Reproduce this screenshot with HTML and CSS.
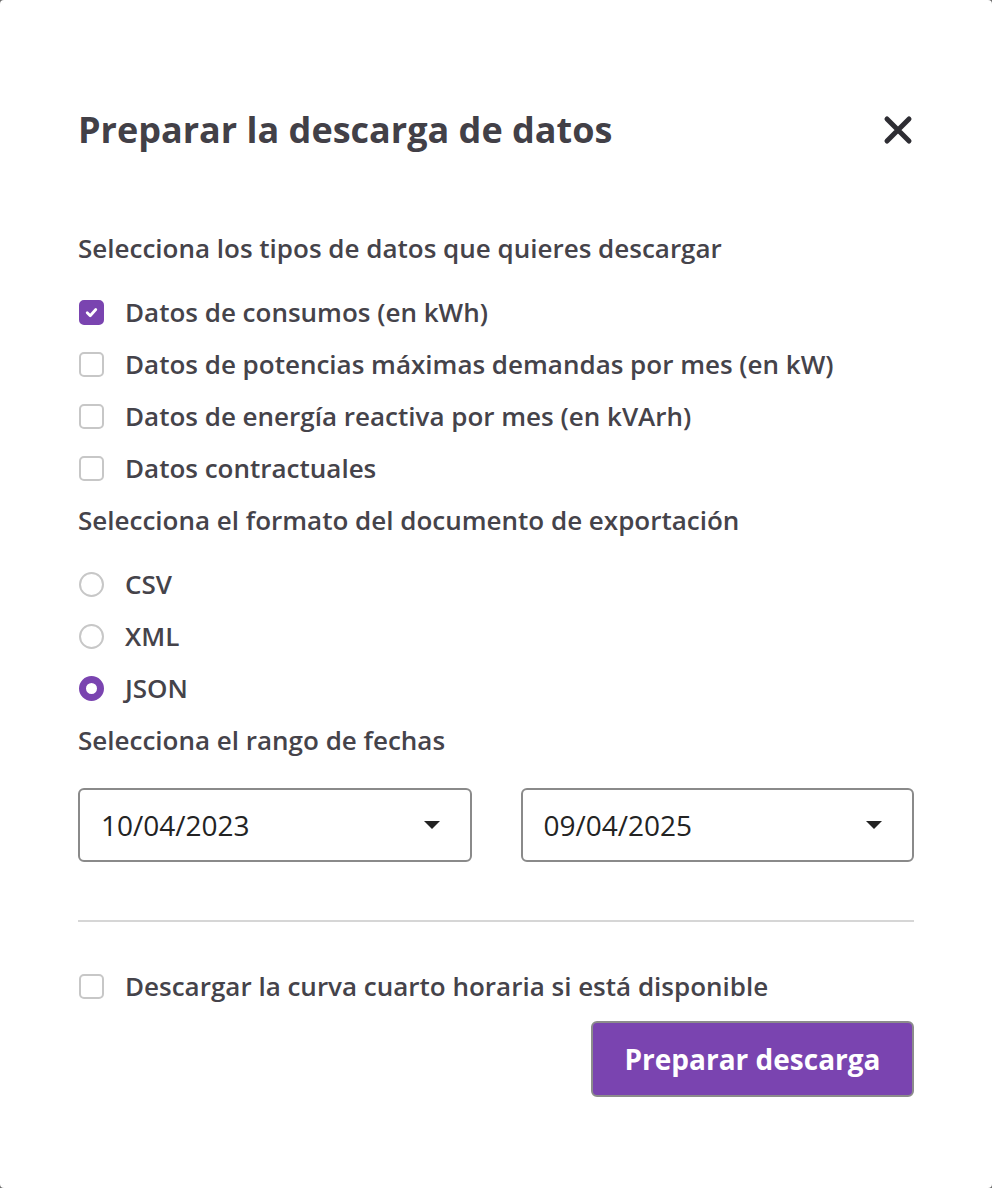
FILE: index.html
```html
<!DOCTYPE html>
<html lang="es">
<head>
<meta charset="utf-8">
<title>Preparar la descarga de datos</title>
<link rel="stylesheet" href="styles.css">
</head>
<body>
<div class="modal">
  <header class="modal-header">
    <h1 class="title">Preparar la descarga de datos</h1>
    <button class="close" aria-label="Cerrar">
      <svg width="32" height="32" viewBox="0 0 32 32"><path d="M5 5 L27 27 M27 5 L5 27" stroke="#2e2d33" stroke-width="5" stroke-linecap="round"/></svg>
    </button>
  </header>

  <p class="section-label first list-label">Selecciona los tipos de datos que quieres descargar</p>
  <ul class="options">
    <li class="option"><span class="check checked"><svg width="15" height="15" viewBox="0 0 14 14"><path d="M3 7.2 L5.8 10 L11 4.2" fill="none" stroke="#fff" stroke-width="2.6" stroke-linecap="round" stroke-linejoin="round"/></svg></span><span class="opt-text">Datos de consumos (en kWh)</span></li>
    <li class="option"><span class="check"></span><span class="opt-text">Datos de potencias máximas demandas por mes (en kW)</span></li>
    <li class="option"><span class="check"></span><span class="opt-text">Datos de energía reactiva por mes (en kVArh)</span></li>
    <li class="option"><span class="check"></span><span class="opt-text">Datos contractuales</span></li>
  </ul>

  <p class="section-label list-label">Selecciona el formato del documento de exportación</p>
  <ul class="options radios">
    <li class="option"><span class="radio"></span><span class="opt-text">CSV</span></li>
    <li class="option"><span class="radio"></span><span class="opt-text">XML</span></li>
    <li class="option"><span class="radio selected"></span><span class="opt-text">JSON</span></li>
  </ul>

  <p class="section-label">Selecciona el rango de fechas</p>
  <div class="dates">
    <div class="select"><span>10/04/2023</span><span class="caret"></span></div>
    <div class="select"><span>09/04/2025</span><span class="caret"></span></div>
  </div>

  <hr class="divider">

  <div class="option extra"><span class="check"></span><span class="opt-text">Descargar la curva cuarto horaria si está disponible</span></div>

  <div class="actions">
    <button class="primary">Preparar descarga</button>
  </div>
</div>
</body>
</html>
```

FILE: styles.css
```css
* { box-sizing: border-box; }
html, body { margin: 0; padding: 0; background: #6b6b6b; }
body { font-family: "Open Sans", "Noto Sans", sans-serif; color: #45434a; }

.modal {
  width: 992px;
  height: 1188px;
  background: #fff;
  border-radius: 4px;
  padding: 0 78px;
  display: flex;
  flex-direction: column;
}

.modal-header {
  display: flex;
  align-items: center;
  justify-content: space-between;
  padding-top: 108px;
  height: 152px;
}
.title {
  margin: 0;
  font-size: 36px;
  font-weight: 700;
  line-height: 44px;
  color: #424047;
}
.close {
  background: none;
  border: 0;
  padding: 0;
  width: 32px;
  height: 32px;
  display: flex;
}

.section-label {
  margin: 0;
  font-size: 26px;
  font-weight: 600;
  line-height: 34px;
  height: 52px;
  display: flex;
  align-items: center;
}
.section-label.first { margin-top: 70px; }
.section-label.list-label { margin-bottom: 12px; }

.options { list-style: none; margin: 0; padding: 0; }
.option {
  display: flex;
  align-items: center;
  height: 52px;
  gap: 21px;
  font-size: 26px;
  font-weight: 600;
}
.opt-text { line-height: 34px; }

.check {
  width: 25px;
  height: 25px;
  border: 2px solid #c7c7c7;
  border-radius: 5px;
  display: flex;
  align-items: center;
  justify-content: center;
  margin-left: 1px;
  flex: none;
}
.check.checked { background: #7a44b0; border-color: #7a44b0; }

.radio {
  width: 25px;
  height: 25px;
  border: 2px solid #c7c7c7;
  border-radius: 50%;
  margin-left: 1px;
  flex: none;
}
.radio.selected { border: 7px solid #7a44b0; }

.dates {
  display: grid;
  grid-template-columns: 1fr 1fr;
  gap: 49px;
  margin-top: 22px;
}
.select {
  height: 74px;
  border: 2px solid #8a8a8a;
  border-radius: 6px;
  display: flex;
  align-items: center;
  justify-content: space-between;
  padding: 0 30px 0 21px;
  font-size: 28px;
  font-weight: 500;
  color: #232323;
}
.caret {
  width: 0;
  height: 0;
  border-left: 8px solid transparent;
  border-right: 8px solid transparent;
  border-top: 8px solid #232323;
}

.divider {
  border: 0;
  border-top: 2px solid #d6d6d6;
  margin: 58px 0 38px;
}

.actions {
  display: flex;
  justify-content: flex-end;
  margin-top: 9px;
}
.primary {
  width: 323px;
  height: 76px;
  background: #7a44b0;
  border: 2px solid #8c8c8c;
  border-radius: 6px;
  color: #fff;
  font-family: "Open Sans", "Noto Sans", sans-serif;
  font-size: 28px;
  font-weight: 700;
}
```
